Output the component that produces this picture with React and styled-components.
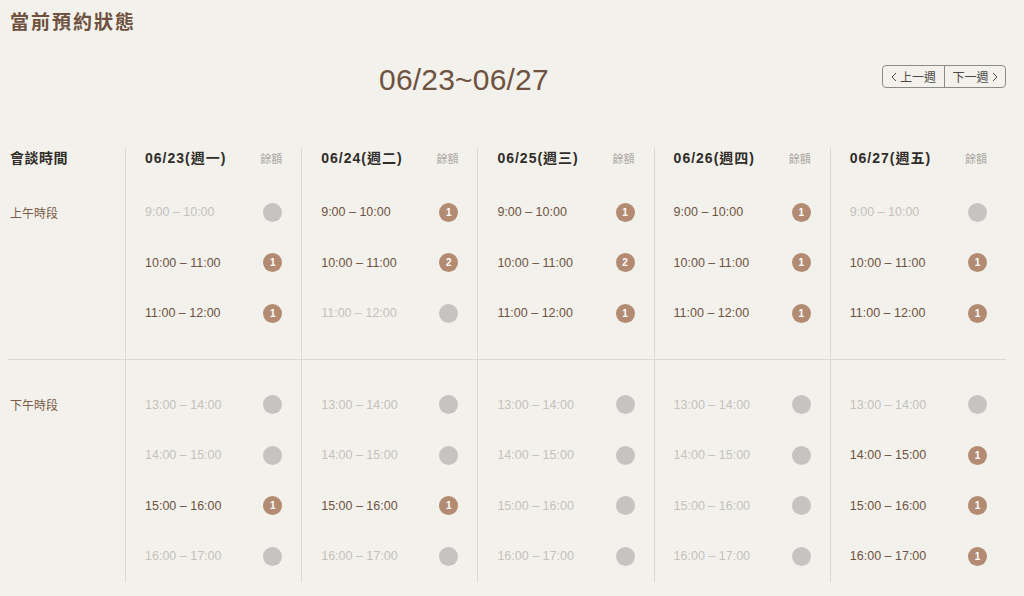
import React from "react";
import styled, { createGlobalStyle } from "styled-components";

const Global = createGlobalStyle`
  html, body { margin: 0; padding: 0; background: #f3f1eb; }
  body { font-family: "Liberation Sans", Arial, "Noto Sans CJK TC", sans-serif; }
  * { box-sizing: border-box; }
`;

const Page = styled.div`
  width: 1024px;
  height: 596px;
  overflow: hidden;
  padding: 8px 18px 0 8px;
  background: #f3f1eb;
`;

const Title = styled.h1`
  margin: 0;
  padding-left: 2px;
  height: 30px;
  line-height: 30px;
  font-size: 19px;
  font-weight: 700;
  letter-spacing: 2px;
  color: #6f5140;
`;

const TopBar = styled.div`
  margin-top: 25px;
  height: 34px;
  display: flex;
  align-items: flex-start;
`;

const WeekRange = styled.div`
  margin-left: 371px;
  line-height: 34px;
  font-size: 30px;
  letter-spacing: 0.2px;
  color: #6e5242;
`;

const Nav = styled.div`
  margin-left: auto;
  margin-top: 2px;
  display: flex;
  height: 23px;
  border: 1px solid #8e8b86;
  border-radius: 4px;
  overflow: hidden;
`;

const NavButton = styled.button`
  display: flex;
  align-items: center;
  justify-content: center;
  gap: 3px;
  width: ${(p) => p.$w}px;
  height: 100%;
  padding: 0;
  border: 0;
  border-left: ${(p) => (p.$divider ? "1px solid #8e8b86" : "0")};
  background: transparent;
  font-family: inherit;
  font-size: 12px;
  color: #4d4a46;
  cursor: pointer;
  svg { display: block; }
`;

const Table = styled.div`
  margin-top: 51px;
  width: 998px;
`;

const Row = styled.div`
  display: grid;
  grid-template-columns: 117px repeat(5, 1fr);
  border-bottom: ${(p) => (p.$separator ? "1px solid #dcd9d3" : "0")};
`;

const LabelCell = styled.div`
  padding: ${(p) => p.$pad};
  padding-left: 2px;
`;

const DayCell = styled.div`
  border-left: 1px solid #dcd9d3;
  padding: ${(p) => p.$pad};
`;

const HeadLabel = styled.div`
  height: 39px;
  line-height: 20px;
  font-size: 14px;
  font-weight: 700;
  letter-spacing: 0.5px;
  color: #2f2c29;
`;

const DayHead = styled.div`
  height: 39px;
  display: flex;
  align-items: flex-start;
  justify-content: space-between;
  padding: 0 19px 0 19px;
`;

const DayName = styled.span`
  line-height: 20px;
  font-size: 14px;
  font-weight: 700;
  letter-spacing: 1px;
  color: #2f2c29;
`;

const Remain = styled.span`
  line-height: 22px;
  font-size: 11px;
  color: #aaa7a2;
`;

const SectionLabel = styled.div`
  height: 50.5px;
  display: flex;
  align-items: center;
  font-size: 12px;
  color: #7a5a48;
`;

const Slot = styled.div`
  height: 50.5px;
  display: flex;
  align-items: center;
  justify-content: space-between;
  padding: 0 19px 0 19px;
`;

const TimeText = styled.span`
  font-size: 12.5px;
  color: ${(p) => (p.$off ? "#c4c2be" : "#6e5242")};
`;

const Badge = styled.span`
  width: 19px;
  height: 19px;
  border-radius: 50%;
  display: flex;
  align-items: center;
  justify-content: center;
  background: ${(p) => (p.$off ? "#c5c4c2" : "#b38b72")};
  color: #fff;
  font-size: 10px;
  font-weight: 700;
`;

const days = [
  { name: "06/23(週一)", am: [0, 1, 1], pm: [0, 0, 1, 0] },
  { name: "06/24(週二)", am: [1, 2, 0], pm: [0, 0, 1, 0] },
  { name: "06/25(週三)", am: [1, 2, 1], pm: [0, 0, 0, 0] },
  { name: "06/26(週四)", am: [1, 1, 1], pm: [0, 0, 0, 0] },
  { name: "06/27(週五)", am: [0, 1, 1], pm: [0, 1, 1, 1] },
];

const amSlots = ["9:00 – 10:00", "10:00 – 11:00", "11:00 – 12:00"];
const pmSlots = ["13:00 – 14:00", "14:00 – 15:00", "15:00 – 16:00", "16:00 – 17:00"];

const Chevron = ({ dir }) => (
  <svg width="6" height="10" viewBox="0 0 6 10" fill="none">
    <path
      d={dir === "left" ? "M5 1 L1 5 L5 9" : "M1 1 L5 5 L1 9"}
      stroke="#4d4a46"
      strokeWidth="1"
    />
  </svg>
);

function Section({ label, slots, field, separator }) {
  const pad = separator ? "0 0 20px 0" : "20px 0 0 0";
  return (
    <Row $separator={separator}>
      <LabelCell $pad={pad}>
        <SectionLabel>{label}</SectionLabel>
      </LabelCell>
      {days.map((d) => (
        <DayCell key={d.name} $pad={pad}>
          {slots.map((t, i) => {
            const n = d[field][i];
            return (
              <Slot key={t}>
                <TimeText $off={n === 0}>{t}</TimeText>
                <Badge $off={n === 0}>{n > 0 ? n : ""}</Badge>
              </Slot>
            );
          })}
        </DayCell>
      ))}
    </Row>
  );
}

export default function App() {
  return (
    <>
      <Global />
      <Page>
        <Title>當前預約狀態</Title>
        <TopBar>
          <WeekRange>06/23~06/27</WeekRange>
          <Nav>
            <NavButton $w={61}>
              <Chevron dir="left" />
              上一週
            </NavButton>
            <NavButton $w={61} $divider>
              下一週
              <Chevron dir="right" />
            </NavButton>
          </Nav>
        </TopBar>
        <Table>
          <Row>
            <LabelCell $pad="0">
              <HeadLabel>會談時間</HeadLabel>
            </LabelCell>
            {days.map((d) => (
              <DayCell key={d.name} $pad="0">
                <DayHead>
                  <DayName>{d.name}</DayName>
                  <Remain>餘額</Remain>
                </DayHead>
              </DayCell>
            ))}
          </Row>
          <Section label="上午時段" slots={amSlots} field="am" separator />
          <Section label="下午時段" slots={pmSlots} field="pm" />
        </Table>
      </Page>
    </>
  );
}
